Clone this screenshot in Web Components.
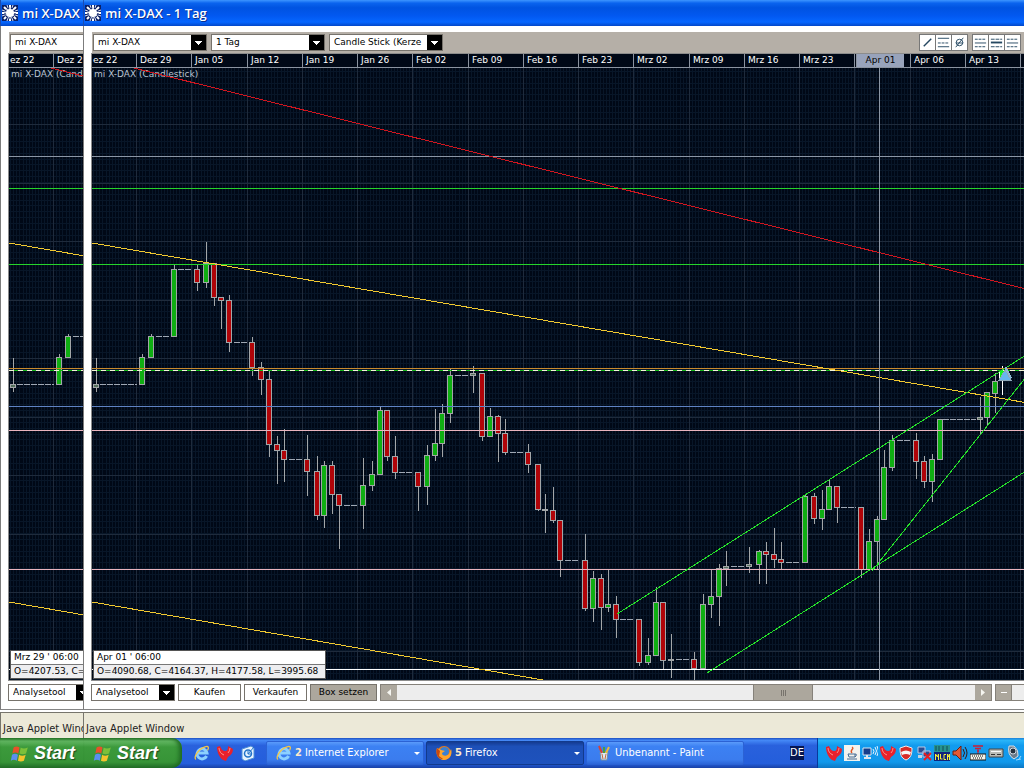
<!DOCTYPE html>
<html lang="de">
<head>
<meta charset="utf-8">
<title>mi X-DAX - 1 Tag</title>
<style>
  html, body { height: 100%; margin: 0; }
  body {
    display: grid;
    grid-template-columns: 83px minmax(0, 1fr);
    overflow: hidden;
    background: #fff;
    font: 11px/14px "DejaVu Sans Condensed", "DejaVu Sans", sans-serif;
  }
</style>
</head>
<body>
<trade-screen>
  <span slot="title">mi X-DAX</span>
  <span slot="time">Mrz 29 ' 06:00</span>
  <span slot="quote">O=4207.53, C=</span>
</trade-screen>
<trade-screen>
  <span slot="title">mi X-DAX - 1 Tag</span>
  <span slot="time">Apr 01 ' 06:00</span>
  <span slot="quote">O=4090.68, C=4164.37, H=4177.58, L=3995.68</span>
  <task-items slot="tasks"></task-items>
</trade-screen>

<script>
const define = (tagName, html, setup) => {
  const template = document.createElement('template');
  template.innerHTML = html;
  customElements.define(tagName, class extends HTMLElement {
    connectedCallback() {
      if (this.shadowRoot) return;
      this.attachShadow({mode: 'open'});
      this.shadowRoot.appendChild(template.content.cloneNode(true));
      if (setup) setup(this, this.shadowRoot);
    }
  });
};

// Shapes for <x-icon name="...">, all on a 16x16 grid
const icons = {
  app: `<path fill="#0a1f66" d="M0 0h16v16H0z"/><path d="M8 0v16M0 8h16M2 2l12 12M14 2L2 14" stroke="#fff" stroke-width="2"/><path d="M5 0l6 16M11 0L5 16M0 5l16 6M0 11l16-6" stroke="#dfe6f5" stroke-width="1"/><circle cx="8" cy="8" r="5" fill="none" stroke="#0a1f66" stroke-width="1.2" stroke-dasharray="2 1.4"/><circle cx="8" cy="8" r="3.6" fill="#fff"/>`,
  line: `<path d="M4 12l8-8" stroke="#244761" stroke-width="1.5"/>`,
  lines: `<path d="M2 3.500h12M2 12.500h12" stroke="#244761"/><path d="M2 8.500h12" stroke="#244761" stroke-dasharray="3 1"/>`,
  none: `<circle cx="8" cy="8" r="3.500" fill="none" stroke="#244761"/><path d="M4 13l8-10M4 8.500h8" stroke="#244761"/>`,
  dashTop: `<path d="M2 4.500h12M2 12.500h12" stroke="#244761" stroke-dasharray="3 1"/><path d="M2 8.500h12" stroke="#244761" stroke-width="1"/>`,
  dashMid: `<path d="M2 4.500h12M2 12.500h12" stroke="#244761" stroke-dasharray="4 1"/><path d="M2 8h12" stroke="#244761" stroke-width="2"/>`,
  dashLow: `<path d="M2 4.500h12" stroke="#244761" stroke-dasharray="3 1"/><path d="M2 8.500h12" stroke="#244761"/><path d="M2 12.500h12" stroke="#244761" stroke-dasharray="3 1"/>`,
  flag: `<path fill="#e8502a" d="M3 3q2.500-2 5 0L7 8q-2.500-1.600-5 0z"/><path fill="#7cc03a" d="M9 3q2.500 1.600 6 0l-1.500 5Q10.500 9.400 8 8z"/><path fill="#5b8ff0" d="M1.700 9q2.500-1.600 5 0l-1 5q-2.500-1.600-5 0z"/><path fill="#f5c32c" d="M7.700 9q2.500 1.600 5.500 0l-1.500 5q-2.500 1.400-5 0z"/>`,
  ie: `<path d="M12.600 11A5 5 0 1 1 13 8H4" fill="none" stroke="#8cd0ff" stroke-width="3"/><path d="M2 14.500C-1 13 4 4 11 1.800c4-1.200 4 1 2.500 3.500" fill="none" stroke="#f4c546" stroke-width="1.300"/>`,
  horn: `<path d="M0 2l3-1c1 3 3 5 5 5s3-1 3-5l5 3c0 4-2 6-5 8l-2 4-3-1C3 13 0 8 0 2z" fill="#e8212c"/><path d="M2 3c0 3 2 6 5 7M13 3q0 3-2 5" stroke="#ff8f86" fill="none"/>`,
  mail: `<path d="M2 4l9-3 3 2v10l-9 3-3-2z" fill="#e7f3ff" stroke="#4d8ed6"/><circle cx="8" cy="8.500" r="3.500" fill="none" stroke="#2273c9" stroke-width="1.500"/><path d="M8 9l6-7M8 6v3h3" stroke="#2273c9" fill="none"/>`,
  fox: `<circle cx="8" cy="8" r="7" fill="#e87817"/><circle cx="8.500" cy="6.500" r="4.600" fill="#3a80d2"/><path d="M1 3l4 2 4 1-3 2c0 3 4 4 7 1l2-5c2 6-2 11-7 11S-1 10 1 3z" fill="#ffa42a"/><path d="M1 3l3 3-1 5 4 3c-5 0-8-5-6-11z" fill="#c94810"/>`,
  paint: `<path d="M4 7h8l-1 8H5z" fill="#dce8f2" stroke="#718ba3"/><path d="M6 8L3 1" stroke="#d94236" stroke-width="2"/><path d="M8 8V2" stroke="#44a044" stroke-width="2"/><path d="M10 8l3-6" stroke="#eab83b" stroke-width="2"/><path d="M6 9l1 5M10 9l-1 5" stroke="#c76a3c"/>`,
  java: `<path d="M0 0h16v16H0z" fill="#f3f3ee"/><path d="M8 2c3 2-3 3 0 6" stroke="#dc5626" stroke-width="1.400" fill="none"/><path d="M4 9h7v3H5zM3 14h10M11 9q3 0 0 3" stroke="#456b92" fill="none"/>`,
  wave: `<path d="M1 3h8v7H1z" fill="#153d8a" stroke="#d8e5f1"/><path d="M2 13h7M5 10v3" stroke="#dce5ee" stroke-width="2"/><path d="M11 4q2 2 0 5M13 2q3 4 0 8M15 1q3 5 0 10" fill="none" stroke="#e5f3ff"/>`,
  shield: `<path d="M8 1l6 2c0 6-1 10-6 12C3 13 2 9 2 3z" fill="#d72c28" stroke="#eee"/><path d="M3 7q5-3 10 0l-1 3q-4-2-8 0z" fill="#f6f6f6"/>`,
  net: `<path d="M2 2h7v6H2zM7 6h7v6H7z" fill="#2c4d91" stroke="#b7c9e6"/><path d="M2 10h4v3H2z" fill="#c6d2e1"/><path d="M8 8l7 7M15 8l-7 7" stroke="#ea1c20" stroke-width="1.800"/>`,
  meter: `<path d="M0 0h16v16H0z" fill="#10247c"/><path d="M0 0h16v7H0z" fill="#26938f"/><path d="M2 1v5M5 1v5M9 1v5M13 1v5" stroke="#114c58"/><path d="M1.500 15V9l2 3 1-3v6M6.500 9v5h2M12 9.500h-2v5h2M13.500 15V9l1 3 1-3v6" stroke="#f2ef3e" fill="none"/>`,
  sound: `<path d="M1 6h3l5-5v14l-5-5H1z" fill="#e45a35" stroke="#6a1e12"/><path d="M11 4q3 4 0 8M13 2q4 6 0 12" fill="none" stroke="#381917"/>`,
  keys: `<path d="M3 1h10M5 3.500h6M7 6h2" stroke="#c92036" stroke-width="1.500"/><path d="M8 4v5" stroke="#c92036"/><path d="M0 9h16v6H0z" fill="#f2f2ea" stroke="#111"/><path d="M2 11h12M3 13h10" stroke="#111" stroke-dasharray="1 1"/>`,
  drive: `<path d="M1 4h14v8H1z" fill="#b9bbb5" stroke="#444"/><path d="M3 6.500h10" stroke="#f8f8f8"/><path d="M3 9.500h4M9 9.500h4" stroke="#333"/>`,
  speaker: `<path d="M3 1h5q5 4 4 10l-4 3Q1 10 3 1z" fill="#6b7b8a" stroke="#d7dfe6"/><circle cx="7" cy="6" r="3" fill="#27323e" stroke="#cfd8df"/><path d="M13 14l2-3M10 15l5-1" stroke="#9ddcff"/>`
};

define('x-icon', `
  <style>
    :host { display: block; flex: none; width: 16px; height: 16px; }
    svg { display: block; width: 100%; height: 100%; }
  </style>
  <svg viewBox="0 0 16 16" aria-hidden="true"></svg>
`, (host, root) => {
  root.querySelector('svg').innerHTML = icons[host.getAttribute('name')];
});

define('drop-down', `
  <style>
    :host { display: block; flex: none; box-sizing: border-box; border: 1px solid #77736c; background: #fff; }
    select {
      display: block;
      box-sizing: border-box;
      width: 100%;
      height: 15px;
      margin: 0;
      padding: 0 16px 0 4px;
      border: 0;
      border-radius: 0;
      outline: 0;
      appearance: none;
      color: #000;
      font: inherit;
      background:
        linear-gradient(#fff, #fff) right 7px top 6px / 1px 4px no-repeat,
        linear-gradient(#fff, #fff) right 6px top 6px / 3px 3px no-repeat,
        linear-gradient(#fff, #fff) right 5px top 6px / 5px 2px no-repeat,
        linear-gradient(#fff, #fff) right 4px top 6px / 7px 1px no-repeat,
        linear-gradient(#000, #000) right top / 15px 100% no-repeat,
        #fff;
    }
  </style>
  <select><option></option></select>
`, (host, root) => {
  root.querySelector('select').setAttribute('aria-label', host.getAttribute('label'));
  root.querySelector('option').textContent = host.getAttribute('value');
});

define('chart-toolbar', `
  <style>
    :host {
      display: flex;
      flex: none;
      align-items: center;
      gap: 4px;
      height: 21px;
      padding-left: 1px;
      background: #b5afa7;
      font: 9px/15px "DejaVu Sans", sans-serif;
    }
    drop-down { width: 114px; }
    .fill { flex: 1; }
    .group { display: flex; flex: none; border: 1px solid #777; }
    button { width: 15px; height: 15px; padding: 0; border: 0; background: #fff; }
    button + button { width: 16px; border-left: 1px solid #777; }
    button x-icon { width: 15px; height: 15px; }
    .group:last-child { margin-right: 3px; }
  </style>
  <drop-down label="Instrument" value="mi X-DAX"></drop-down>
  <drop-down label="Periode" value="1 Tag"></drop-down>
  <drop-down label="Darstellung" value="Candle Stick (Kerze"></drop-down>
  <div class="fill"></div>
  <div class="group">
    <button aria-label="Linie"><x-icon name="line"></x-icon></button>
    <button aria-label="Linien"><x-icon name="lines"></x-icon></button>
    <button aria-label="Keine"><x-icon name="none"></x-icon></button>
  </div>
  <div class="group">
    <button aria-label="Raster 1"><x-icon name="dashTop"></x-icon></button>
    <button aria-label="Raster 2"><x-icon name="dashMid"></x-icon></button>
    <button aria-label="Raster 3"><x-icon name="dashLow"></x-icon></button>
  </div>
`);

// Chart coordinates are those of the full plot; its origin is at 92,68
const originX = 92;
const originY = 68;
const weeks = [
  [136, 'Dez 29'], [191, 'Jan 05'], [247, 'Jan 12'], [302, 'Jan 19'], [357, 'Jan 26'],
  [412, 'Feb 02'], [468, 'Feb 09'], [523, 'Feb 16'], [578, 'Feb 23'], [633, 'Mrz 02'],
  [689, 'Mrz 09'], [744, 'Mrz 16'], [799, 'Mrz 23'], [854, 'Apr 01'], [910, 'Apr 06'],
  [965, 'Apr 13'], [1020, 'Apr 20']
];

define('time-axis', `
  <style>
    :host {
      display: flex;
      flex: none;
      overflow: hidden;
      height: 13px;
      border-bottom: 1px solid #8b93a0;
      background: #000816;
      color: #fff;
      font: 9px/13px "DejaVu Sans", sans-serif;
      white-space: nowrap;
    }
    span { box-sizing: border-box; flex: none; padding-left: 3px; border-left: 1px solid #8b93a0; }
    .first { padding-left: 1px; border: 0; }
    .current { padding-left: 1px; }
    mark { display: block; box-sizing: border-box; width: 48px; border-left: 1px solid #8b93a0; background: #98a3bb; color: #000; text-align: center; }
  </style>
  <span class="first">ez 22</span>
`, (host, root) => {
  root.querySelector('.first').style.width = `${weeks[0][0] - originX}px`;
  weeks.forEach(([x, label], i) => {
    const cell = document.createElement('span');
    const next = weeks[i + 1];
    cell.style.width = `${next ? next[0] - x : 56}px`;
    if (label === 'Apr 01') {
      cell.className = 'current';
      cell.innerHTML = `<mark>${label}</mark>`;
    } else cell.textContent = label;
    root.appendChild(cell);
  });
});

// centre, body top, body bottom, high, low, kind (g green, r red, p flat)
const candles = [
  [96, 384, 388, 358, 392, 'p'], [142, 357, 385, 354, 385, 'g'], [151, 336, 358, 334, 358, 'g'],
  [174, 269, 337, 264, 337, 'g'], [197, 269, 283, 265, 291, 'r'], [206, 263, 283, 242, 288, 'g'],
  [214, 263, 298, 263, 306, 'r'], [221, 297, 301, 297, 329, 'r'], [229, 300, 343, 295, 352, 'r'],
  [252, 342, 368, 337, 376, 'r'], [261, 367, 380, 362, 395, 'r'], [269, 379, 445, 371, 457, 'r'],
  [277, 444, 451, 436, 484, 'r'], [284, 450, 460, 429, 482, 'r'], [307, 459, 472, 435, 496, 'r'],
  [317, 471, 516, 456, 520, 'r'], [324, 465, 516, 461, 528, 'g'], [332, 465, 495, 461, 514, 'r'],
  [339, 494, 506, 494, 549, 'r'], [363, 485, 506, 458, 529, 'g'], [372, 474, 486, 461, 491, 'g'],
  [380, 410, 475, 407, 475, 'g'], [387, 410, 457, 410, 461, 'r'], [395, 456, 473, 436, 479, 'r'],
  [418, 472, 487, 472, 511, 'r'], [427, 455, 487, 445, 505, 'g'], [435, 443, 456, 409, 461, 'g'],
  [442, 413, 444, 404, 457, 'g'], [450, 375, 414, 369, 423, 'g'], [473, 373, 376, 366, 393, 'p'],
  [482, 373, 437, 373, 441, 'r'], [490, 416, 437, 408, 437, 'g'], [498, 416, 434, 415, 462, 'r'],
  [505, 433, 453, 419, 455, 'r'], [528, 452, 465, 444, 473, 'r'], [538, 464, 510, 464, 511, 'r'],
  [545, 509, 511, 494, 533, 'p'], [553, 510, 521, 487, 523, 'r'], [560, 520, 561, 520, 577, 'r'],
  [585, 560, 609, 534, 611, 'r'], [593, 578, 609, 571, 622, 'g'], [601, 578, 608, 574, 630, 'r'],
  [608, 604, 608, 570, 612, 'g'], [616, 604, 620, 596, 638, 'r'], [639, 619, 663, 619, 666, 'r'],
  [648, 655, 663, 638, 665, 'g'], [656, 602, 656, 587, 656, 'g'], [663, 602, 661, 602, 669, 'r'],
  [671, 659, 661, 634, 678, 'p'], [694, 659, 669, 652, 680, 'r'], [703, 604, 669, 594, 669, 'g'],
  [711, 596, 605, 570, 618, 'g'], [719, 568, 597, 564, 626, 'g'], [726, 566, 569, 551, 586, 'p'],
  [749, 564, 567, 547, 573, 'p'], [759, 551, 565, 550, 584, 'g'], [766, 551, 555, 542, 584, 'r'],
  [774, 554, 560, 528, 568, 'r'], [781, 559, 563, 542, 570, 'r'], [805, 496, 563, 495, 563, 'g'],
  [814, 496, 519, 493, 524, 'r'], [822, 509, 519, 490, 530, 'g'], [829, 486, 510, 480, 510, 'g'],
  [837, 486, 508, 486, 523, 'r'], [861, 507, 570, 507, 578, 'r'], [869, 541, 570, 529, 570, 'g'],
  [877, 519, 542, 516, 569, 'g'], [884, 467, 520, 450, 520, 'g'], [892, 440, 468, 435, 471, 'g'],
  [916, 440, 462, 433, 479, 'r'], [924, 461, 482, 456, 488, 'r'], [932, 459, 482, 454, 502, 'g'],
  [940, 419, 460, 419, 460, 'g'], [980, 417, 420, 397, 434, 'p'], [987, 392, 418, 392, 426, 'g'],
  [995, 381, 394, 373, 413, 'g'], [1002, 370, 381, 366, 395, 'n']
];
// weekend dashes: x1, x2, y
const gaps = [
  [100, 137, 384], [156, 169, 336], [178, 192, 269], [234, 247, 342], [289, 302, 459],
  [344, 358, 505], [399, 413, 472], [455, 468, 375], [510, 523, 452], [565, 579, 560],
  [620, 634, 619], [676, 689, 659], [731, 745, 566], [786, 800, 562], [841, 856, 507],
  [897, 911, 440], [943, 976, 419]
];
const levels = [
  [156, '#8b96a5'], [188, '#25d42a'], [264, '#25d42a'], [368, '#c98a2c'],
  [406, '#5f83c4'], [430, '#eab4bf'], [569, '#eab4bf'], [669, '#fff']
];
const trends = [
  [134, 68, 1034, 291, '#d1161f'], [92, 243, 1034, 404, '#f2c930'], [92, 602, 543, 680, '#f2c930'],
  [617, 614, 1034, 350, '#25e22a'], [707, 673, 1034, 466, '#25e22a'], [872, 571, 1034, 367, '#25e22a']
];
const fills = {g: '#0fae12', r: '#b00408', p: '#53705c', n: '#10f020'};

const drawChart = () => {
  const line = (x1, y1, x2, y2, color, extra = '') =>
    `<path d="M${x1} ${y1}L${x2} ${y2}" stroke="${color}" ${extra}/>`;
  const parts = [];
  for (let i = 0; i < 340; i++) {
    const x = 81 + Math.round(i * 55.25 / 18);
    parts.push(line(x + 0.5, 68, x + 0.5, 2000, '#081628'));
  }
  for (let i = 0; i < 240; i++) {
    const y = 65 + Math.round(i * 5.85);
    parts.push(line(92, y + 0.5, 3000, y + 0.5, '#081628'));
  }
  weeks.forEach(([x]) => parts.push(line(x + 0.5, 68, x + 0.5, 2000, '#1f2b3c')));
  for (let i = 0; i < 10; i++) {
    const y = 124 + Math.round(i * 58.5);
    parts.push(line(92, y + 0.5, 3000, y + 0.5, '#1f2b3c'));
  }
  gaps.forEach(([x1, x2, y]) =>
    parts.push(line(x1, y + 0.5, x2, y + 0.5, '#a0a8b4', 'stroke-dasharray="6 1"')));
  candles.forEach(([x, top, bottom, high, low, kind]) => {
    const edge = kind === 'n' ? '#fff' : '#a3a6a8';
    parts.push(line(x + 0.5, high, x + 0.5, low, edge));
    parts.push(`<rect x="${x - 2.5}" y="${top + 0.5}" width="5" height="${bottom - top - 1}" fill="${fills[kind]}" stroke="${edge}"/>`);
  });
  levels.forEach(([y, color]) => parts.push(line(92, y + 0.5, 3000, y + 0.5, color)));
  parts.push(line(92, 370.5, 3000, 370.5, '#14b818'));
  parts.push(line(92, 370.5, 3000, 370.5, '#f4f6d8', 'stroke-dasharray="5 4"'));
  parts.push('<text x="94" y="77" fill="#b9c4d2">mi X-DAX (Candlestick)</text>');
  trends.forEach(([x1, y1, x2, y2, color]) => parts.push(line(x1, y1, x2, y2, color)));
  parts.push(line(879.5, 68, 879.5, 2000, '#8b96a5'));
  parts.push('<path d="M1006 366l6 12h-11z" fill="#8fb9d6"/><path d="M1005 370l6 10h-12z" fill="#66b6ee" stroke="#8ea7b8"/>');
  return `<g transform="translate(${-originX} ${-originY})">${parts.join('')}</g>`;
};

define('candle-chart', `
  <style>
    :host { display: block; flex: 1; min-height: 0; position: relative; overflow: hidden; background: #000816; }
    svg { display: block; width: 100%; height: 100%; shape-rendering: crispEdges; font: 9px "DejaVu Sans", sans-serif; }
    /* read-out that floats over the plot */
    .quote {
      position: absolute;
      left: 1px;
      bottom: 1px;
      border: 1px solid #555;
      color: #000;
      font: 9px/13px "DejaVu Sans", sans-serif;
      white-space: nowrap;
    }
    .quote div { padding: 0 7px 0 3px; background: #fff; }
    .quote div + div { border-top: 1px solid #777; background: #eeeef0; }
  </style>
  <svg role="img" aria-label="Candlestick"></svg>
  <div class="quote">
    <div><slot name="time"></slot></div>
    <div><slot name="quote"></slot></div>
  </div>
`, (host, root) => {
  root.querySelector('svg').innerHTML = drawChart();
});

define('scroll-strip', `
  <style>
    :host { display: flex; flex: 1; min-width: 612px; box-sizing: border-box; height: 17px; border: 1px solid #85817a; background: #ededed; }
    button { flex: none; width: 16px; padding: 0; border: 0; background: #aca79d; }
    svg { display: block; width: 16px; height: 15px; }
    .thumb { width: 60px; border: solid #85817a; border-width: 0 1px; }
    .thumb svg { width: 58px; }
    .before { flex: 356; }
    .after { flex: 162; }
  </style>
  <button aria-label="Links"><svg><path d="M10 4v7L6 7.500z" fill="#f5f5f0"/></svg></button>
  <div class="before"></div>
  <button class="thumb" aria-label="Position"><svg><path d="M27.500 5v6M29.500 5v6M31.500 5v6" stroke="#77736c"/></svg></button>
  <div class="after"></div>
  <button aria-label="Rechts"><svg><path d="M6 4v7l4-3.500z" fill="#f5f5f0"/></svg></button>
`);

define('order-bar', `
  <style>
    :host { display: flex; flex: none; gap: 3px; height: 17px; padding: 3px 0 8px; font: 9px/15px "DejaVu Sans", sans-serif; }
    drop-down { width: 84px; margin-left: -1px; }
    .order { flex: none; box-sizing: border-box; width: 63px; padding: 0; border: 1px solid #77736c; background: #fff; color: #000; font: inherit; }
    .box { width: 67px; background: #aca79d; }
    .zoom { display: flex; flex: none; width: 28px; border: 1px solid #85817a; border-right: 0; background: #ededed; }
    .zoom button { width: 16px; padding: 0; border: 0; border-right: 1px solid #85817a; background: #aca79d; }
    .zoom svg { display: block; width: 15px; height: 15px; }
  </style>
  <drop-down label="Werkzeug" value="Analysetool"></drop-down>
  <button class="order">Kaufen</button>
  <button class="order">Verkaufen</button>
  <button class="order box">Box setzen</button>
  <scroll-strip></scroll-strip>
  <div class="zoom"><button aria-label="Verkleinern"><svg><path d="M5 7.500h6" stroke="#fff"/></svg></button></div>
`);

define('task-button', `
  <style>
    :host { display: block; flex: 0 1 158px; min-width: 0; }
    button {
      display: flex;
      box-sizing: border-box;
      align-items: center;
      gap: 3px;
      width: 100%;
      height: 24px;
      padding: 0 3px 0 9px;
      border: 1px solid #2b62d4;
      border-radius: 2px;
      background: linear-gradient(#5b9bfa, #3c81f3 20%, #3b7cee 80%, #2c66d8);
      color: #fff;
      font: inherit;
      white-space: nowrap;
    }
    :host([active]) button { border-color: #123a8c; background: linear-gradient(#143b91, #1d50b8 20%, #1e52bd); }
    b { color: #ffe9c9; }
    b:empty { display: none; }
    i { width: 0; margin-left: auto; border: 3px solid transparent; border-top-color: #fff; border-bottom: 0; }
    :host(:not([count])) i { display: none; }
  </style>
  <button><x-icon></x-icon><b></b><slot></slot><i></i></button>
`, (host, root) => {
  const icon = document.createElement('x-icon');
  icon.setAttribute('name', host.getAttribute('icon'));
  root.querySelector('b').textContent = host.getAttribute('count') || '';
  root.querySelector('x-icon').replaceWith(icon);
});

define('task-items', `
  <style>
    :host { display: flex; flex: 1; align-items: center; min-width: 0; height: 30px; }
    .quick { display: flex; flex: none; gap: 7px; padding: 0 10px 0 12px; }
    .tasks { display: flex; flex: 1; gap: 2px; min-width: 0; }
    .lang { flex: none; width: 14px; margin-right: 13px; background: #061650; color: #fff; text-align: center; }
    .tray {
      display: flex;
      flex: none;
      box-sizing: border-box;
      align-items: center;
      gap: 2px;
      height: 30px;
      padding: 0 2px 0 8px;
      border-left: 1px solid #083a9c;
      background: linear-gradient(#1c80d8, #29b4f8 8%, #129bee 25%, #1198eb 80%, #0c77c4);
    }
  </style>
  <div class="quick">
    <x-icon name="ie"></x-icon><x-icon name="horn"></x-icon><x-icon name="mail"></x-icon>
  </div>
  <div class="tasks">
    <task-button icon="ie" count="2">Internet Explorer</task-button>
    <task-button icon="fox" count="5" active>Firefox</task-button>
    <task-button icon="paint">Unbenannt - Paint</task-button>
  </div>
  <div class="lang">DE</div>
  <div class="tray"></div>
`, (host, root) => {
  const tray = ['horn', 'java', 'wave', 'horn', 'shield', 'net', 'meter', 'sound', 'keys', 'drive', 'speaker'];
  root.querySelector('.tray').innerHTML = tray.map(name => `<x-icon name="${name}"></x-icon>`).join('');
});

define('trade-screen', `
  <style>
    :host { display: flex; flex-direction: column; min-width: 0; height: 100vh; overflow: hidden; }
    header {
      display: flex;
      flex: none;
      align-items: center;
      gap: 4px;
      height: 26px;
      padding-left: 1px;
      border-left: 1px solid #1b4bb0;
      background: linear-gradient(#3d95ff, #0a63ee 12%, #0053e1 30%, #0258f0 60%, #0566ff 85%, #0347c8);
      color: #fff;
      font: 600 13px/18px "Open Sans", sans-serif;
      text-shadow: 1px 1px #0a2f8e;
      white-space: nowrap;
    }
    main {
      display: flex;
      flex: 1;
      flex-direction: column;
      min-height: 0;
      padding: 6px 0 0 7px;
      border-left: 1px solid #7c7c7c;
      border-bottom: 1px solid #858585;
      background: #fff;
    }
    .plot { display: flex; flex: 1; flex-direction: column; min-height: 0; border: solid #8c8c8c; border-width: 1px 0 1px 1px; }
    chart-toolbar, order-bar { margin-left: 1px; }
    .status {
      flex: none;
      box-sizing: border-box;
      height: 26px;
      margin-top: 2px;
      padding: 9px 0 0 2px;
      border: solid #77756c;
      border-width: 1px 0 0 1px;
      background: #ece9d8;
      color: #222;
      white-space: nowrap;
    }
    footer {
      display: flex;
      flex: none;
      height: 30px;
      background: linear-gradient(#1c4fc0, #4488f6 8%, #2961dd 25%, #245edb 85%, #1941a5);
    }
    .start {
      display: flex;
      flex: none;
      box-sizing: border-box;
      align-items: center;
      gap: 5px;
      width: 99px;
      padding: 0 0 0 10px;
      border: 0;
      border-radius: 0 10px 10px 0;
      background: linear-gradient(#2c7a2c, #63b863 10%, #3c9a3c 30%, #379437 80%, #24702a);
      box-shadow: inset -3px 0 4px #1f6a22;
      color: #fff;
      font: italic bold 18px/24px "Liberation Sans", sans-serif;
      text-shadow: 1px 1px 1px #1d4a1d;
    }
    .start x-icon { width: 19px; height: 19px; }
  </style>
  <header><x-icon name="app"></x-icon><slot name="title"></slot></header>
  <main>
    <chart-toolbar></chart-toolbar>
    <div class="plot">
      <time-axis></time-axis>
      <candle-chart><slot name="time" slot="time"></slot><slot name="quote" slot="quote"></slot></candle-chart>
    </div>
    <order-bar></order-bar>
  </main>
  <div class="status">Java Applet Window</div>
  <footer>
    <button class="start"><x-icon name="flag"></x-icon>Start</button>
    <slot name="tasks"></slot>
  </footer>
`);
</script>
</body>
</html>
